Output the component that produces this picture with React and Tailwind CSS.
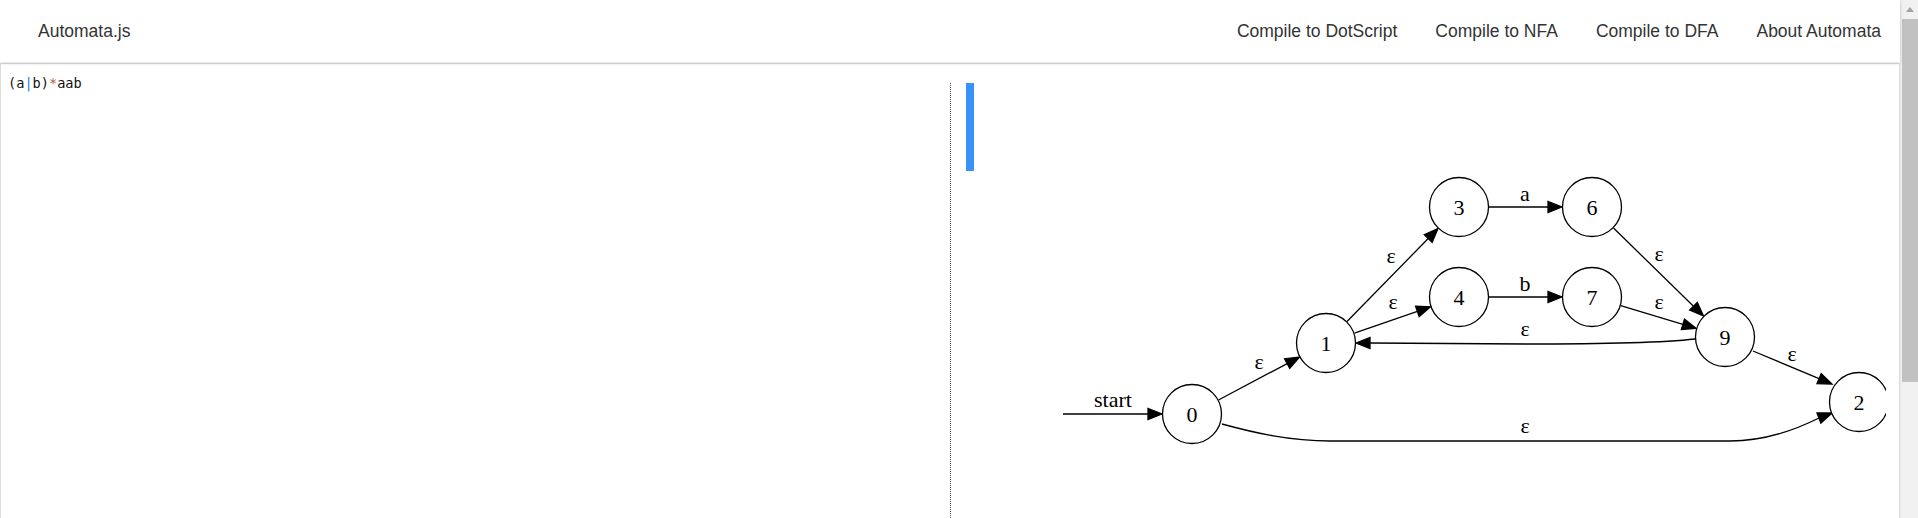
import React from 'react';

const links = ['Compile to DotScript', 'Compile to NFA', 'Compile to DFA', 'About Automata'];

const nodes = [
  { id: '0', x: 1192, y: 414 },
  { id: '1', x: 1326, y: 343 },
  { id: '3', x: 1459, y: 207 },
  { id: '4', x: 1459, y: 297 },
  { id: '6', x: 1592, y: 207 },
  { id: '7', x: 1592, y: 297 },
  { id: '9', x: 1725, y: 337 },
  { id: '2', x: 1859, y: 402 },
];

// straight edges: [from, to(tip), label, labelX, labelBaseline]
const edges = [
  [1063, 414, 1162, 414, 'start', 1113, 407],
  [1218.5, 400, 1299.5, 357, 'ε', 1259, 369],
  [1347, 321.5, 1438, 228.5, 'ε', 1391, 263],
  [1354.4, 333.2, 1430.6, 306.8, 'ε', 1393, 309],
  [1489, 207, 1562, 207, 'a', 1525, 201],
  [1489, 297, 1562, 297, 'b', 1525, 291],
  [1613.5, 228, 1703.5, 316, 'ε', 1659, 261],
  [1620.7, 305.6, 1696.3, 328.4, 'ε', 1659, 309],
  [1753, 351, 1832, 384, 'ε', 1792, 361],
];

const head = (bx, by, tx, ty) => {
  const dx = tx - bx;
  const dy = ty - by;
  const l = Math.hypot(dx, dy);
  const ux = dx / l;
  const uy = dy / l;
  const baseX = tx - ux * 14;
  const baseY = ty - uy * 14;
  return {
    base: [baseX, baseY],
    points: `${tx},${ty} ${baseX - uy * 5.5},${baseY + ux * 5.5} ${baseX + uy * 5.5},${baseY - ux * 5.5}`,
  };
};

const Graph = () => (
  <svg
    width={935}
    height={347}
    viewBox="951 171 935 347"
    className="shrink-0"
    style={{ fontFamily: '"Liberation Serif", "Times New Roman", serif' }}
  >
    {edges.map(([x1, y1, x2, y2, label, lx, ly], i) => {
      const h = head(x1, y1, x2, y2);
      return (
        <g key={i}>
          <line x1={x1} y1={y1} x2={h.base[0]} y2={h.base[1]} stroke="#000" strokeWidth="1.3" />
          <polygon points={h.points} fill="#000" stroke="#000" strokeWidth="1.3" />
          <text x={lx} y={ly} textAnchor="middle" fontSize="22" fill="#000">
            {label}
          </text>
        </g>
      );
    })}

    {/* 9 -> 1 back edge */}
    <path
      d="M1695,339 C1660,343 1600,344 1525,344 C1450,344 1400,343 1370,343"
      fill="none"
      stroke="#000"
      strokeWidth="1.3"
    />
    <polygon points={head(1370, 343, 1356, 343).points} fill="#000" stroke="#000" strokeWidth="1.3" />
    <text x={1525} y={336} textAnchor="middle" fontSize="22">ε</text>

    {/* 0 -> 2 bottom edge */}
    <path
      d="M1222,424 C1255,433 1290,441 1330,441 L1730,441 C1765,441 1795,430 1819,418"
      fill="none"
      stroke="#000"
      strokeWidth="1.3"
    />
    <polygon points={head(1819, 418, 1832, 413).points} fill="#000" stroke="#000" strokeWidth="1.3" />
    <text x={1525} y={433} textAnchor="middle" fontSize="22">ε</text>

    {nodes.map((n) => (
      <g key={n.id}>
        <circle cx={n.x} cy={n.y} r="29.5" fill="#fff" stroke="#000" strokeWidth="1.3" />
        <text x={n.x} y={n.y + 7.5} textAnchor="middle" fontSize="22">
          {n.id}
        </text>
      </g>
    ))}
  </svg>
);

const App = () => {
  return (
    <div className="flex h-screen w-full overflow-hidden bg-white">
      <div className="flex min-w-0 flex-1 flex-col">
        <header className="relative z-10 flex h-[62px] shrink-0 items-center justify-between bg-white pl-[38px] font-['Liberation_Sans',Arial,sans-serif] text-[17.5px] text-[#333] shadow-[0_1px_4px_rgba(0,0,0,0.16)]">
          <span>Automata.js</span>
          <nav className="flex">
            {links.map((l) => (
              <a key={l} className="cursor-pointer px-[19px]">
                {l}
              </a>
            ))}
          </nav>
        </header>

        <main className="mt-px flex h-[700px] shrink-0 border border-[#dcdcdc]">
          <div className="w-[949px] shrink-0 pl-[7px] pt-[10px] font-['DejaVu_Sans_Mono',monospace] text-[13.6px] leading-[18px] text-[#111]">
            (a<span className="text-[#1f7bd6]">|</span>b)<span className="text-[#b0652a]">*</span>aab
          </div>

          <div className="mr-[12px] mt-[19px] flex min-w-0 flex-1 flex-col overflow-hidden border-l border-dotted border-[#555]">
            <div className="pl-[15px]">
              <div className="h-[88px] w-2 bg-[#3893f8]" />
            </div>
            <Graph />
          </div>
        </main>
      </div>

      {/* page scrollbar */}
      <div className="flex w-[18px] shrink-0 flex-col border-l border-[#e8e8e8] bg-[#f1f1f1]">
        <div className="flex h-[19px] items-center justify-center">
          <svg width="8" height="5" viewBox="0 0 8 5">
            <polygon points="4,0 8,5 0,5" fill="#a3a3a3" />
          </svg>
        </div>
        <div className="ml-px h-[363px] bg-[#c1c1c1]" />
      </div>
    </div>
  );
};

export default App;
